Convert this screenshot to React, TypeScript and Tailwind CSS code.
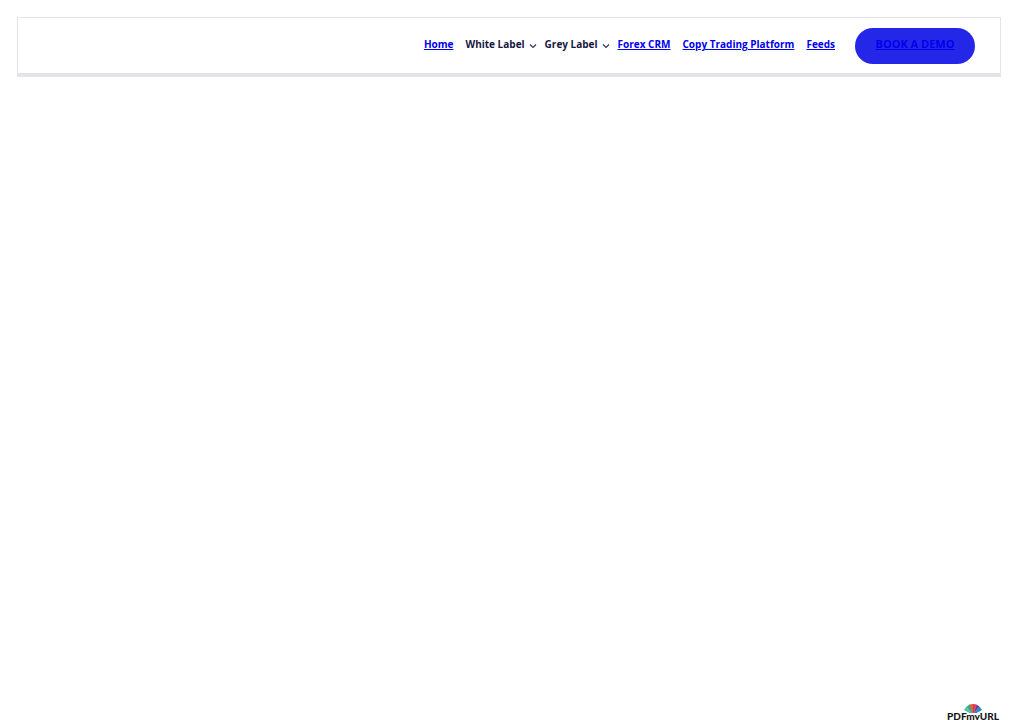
function Chevron() {
  return (
    <svg className="mt-1 h-2 w-2 shrink-0" viewBox="0 0 8 8" fill="none" stroke="#34345c" strokeWidth="1.2" aria-hidden="true">
      <path d="M1 2.5 4 5.5 7 2.5" />
    </svg>
  );
}

const linkClass = "text-[#0000ee] underline";
const menuClass = "flex items-center gap-1 text-[#17173f]";

function Logo() {
  return (
    <a href="#pdfmyurl" className="flex h-4 flex-col items-center text-[#171717]">
      <svg className="h-[9px] w-[18px] shrink-0" viewBox="0 0 18 9" aria-hidden="true">
        <path d="M9 11 0 6 2.5 2.5Z" fill="#48c7a0" />
        <path d="M9 11 2.5 2.5 6 0.5Z" fill="#2ea88b" />
        <path d="M9 11 5.5 0.5 9 0Z" fill="#e85a3a" />
        <path d="M9 11 9 0 12.5 0.5Z" fill="#d63a52" />
        <path d="M9 11 12.5 0.5 15.5 2.5Z" fill="#793d91" />
        <path d="M9 11 15.5 2.5 18 6Z" fill="#2787c7" />
      </svg>
      <span className="-mt-1 font-[Lato,sans-serif] text-[10px] leading-[14px] font-black">PDFmyURL</span>
    </a>
  );
}

export default function App() {
  return (
    <div className="flex min-h-screen flex-col justify-between bg-white font-['Open_Sans',sans-serif]">
      <header className="mx-[17px] mt-[17px] flex justify-end border border-b-4 border-[#e2e4ea] pt-[10px] pr-[25px] pb-[9px]">
        <nav aria-label="Main" className="flex items-start gap-5 text-[10px] leading-8 font-bold">
          <div className="flex gap-2">
            <div className="flex gap-3">
              <a href="#home" className={linkClass}>Home</a>
              <button type="button" className={menuClass}>White Label<Chevron /></button>
            </div>
            <button type="button" className={menuClass}>Grey Label<Chevron /></button>
            <div className="flex gap-3">
              <a href="#crm" className={linkClass}>Forex CRM</a>
              <a href="#copy" className={linkClass}>Copy Trading Platform</a>
              <a href="#feeds" className={linkClass}>Feeds</a>
            </div>
          </div>
          <a href="#demo" className="h-9 w-[120px] rounded-full bg-[#2527e8] text-center text-[11px] text-[#0000ee] underline">BOOK A DEMO</a>
        </nav>
      </header>
      <footer className="flex justify-end pr-[19px]">
        <Logo />
      </footer>
    </div>
  );
}
